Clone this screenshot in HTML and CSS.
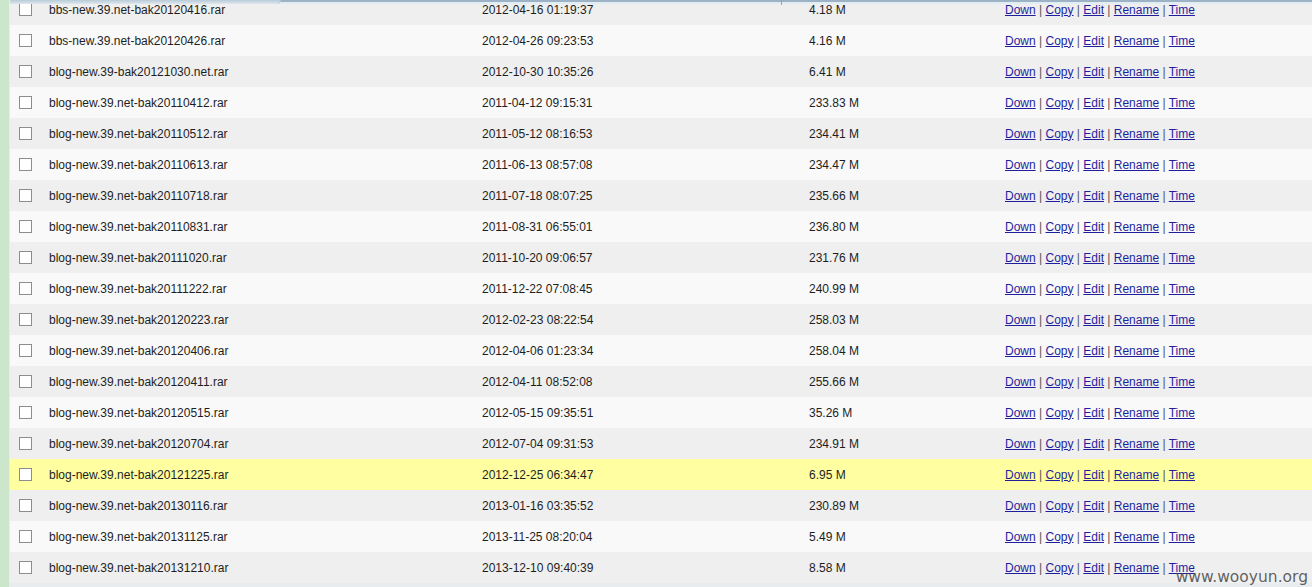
FILE: index.html
```html
<!DOCTYPE html>
<html>
<head>
    <meta charset="UTF-8">
    <title>File Manager</title>
    <link rel="stylesheet" href="styles.css">
</head>
<body>
    <div class="page">
        <div class="side-bar"></div>

        <div class="list-wrap">
            <div class="top-strip">
                <div class="top-tab"></div>
                <div class="top-line"><span class="top-divider"></span></div>
            </div>

            <table class="file-list">
                <colgroup>
                    <col class="c-check">
                    <col class="c-name">
                    <col class="c-date">
                    <col class="c-size">
                    <col>
                </colgroup>
                <tbody>
                    <tr><td><input type="checkbox"></td><td>bbs-new.39.net-bak20120416.rar</td><td>2012-04-16 01:19:37</td><td>4.18 M</td><td class="ops"><a href="#">Down</a> | <a href="#">Copy</a> | <a href="#">Edit</a> | <a href="#">Rename</a> | <a href="#">Time</a></td></tr>
                    <tr><td><input type="checkbox"></td><td>bbs-new.39.net-bak20120426.rar</td><td>2012-04-26 09:23:53</td><td>4.16 M</td><td class="ops"><a href="#">Down</a> | <a href="#">Copy</a> | <a href="#">Edit</a> | <a href="#">Rename</a> | <a href="#">Time</a></td></tr>
                    <tr><td><input type="checkbox"></td><td>blog-new.39-bak20121030.net.rar</td><td>2012-10-30 10:35:26</td><td>6.41 M</td><td class="ops"><a href="#">Down</a> | <a href="#">Copy</a> | <a href="#">Edit</a> | <a href="#">Rename</a> | <a href="#">Time</a></td></tr>
                    <tr><td><input type="checkbox"></td><td>blog-new.39.net-bak20110412.rar</td><td>2011-04-12 09:15:31</td><td>233.83 M</td><td class="ops"><a href="#">Down</a> | <a href="#">Copy</a> | <a href="#">Edit</a> | <a href="#">Rename</a> | <a href="#">Time</a></td></tr>
                    <tr><td><input type="checkbox"></td><td>blog-new.39.net-bak20110512.rar</td><td>2011-05-12 08:16:53</td><td>234.41 M</td><td class="ops"><a href="#">Down</a> | <a href="#">Copy</a> | <a href="#">Edit</a> | <a href="#">Rename</a> | <a href="#">Time</a></td></tr>
                    <tr><td><input type="checkbox"></td><td>blog-new.39.net-bak20110613.rar</td><td>2011-06-13 08:57:08</td><td>234.47 M</td><td class="ops"><a href="#">Down</a> | <a href="#">Copy</a> | <a href="#">Edit</a> | <a href="#">Rename</a> | <a href="#">Time</a></td></tr>
                    <tr><td><input type="checkbox"></td><td>blog-new.39.net-bak20110718.rar</td><td>2011-07-18 08:07:25</td><td>235.66 M</td><td class="ops"><a href="#">Down</a> | <a href="#">Copy</a> | <a href="#">Edit</a> | <a href="#">Rename</a> | <a href="#">Time</a></td></tr>
                    <tr><td><input type="checkbox"></td><td>blog-new.39.net-bak20110831.rar</td><td>2011-08-31 06:55:01</td><td>236.80 M</td><td class="ops"><a href="#">Down</a> | <a href="#">Copy</a> | <a href="#">Edit</a> | <a href="#">Rename</a> | <a href="#">Time</a></td></tr>
                    <tr><td><input type="checkbox"></td><td>blog-new.39.net-bak20111020.rar</td><td>2011-10-20 09:06:57</td><td>231.76 M</td><td class="ops"><a href="#">Down</a> | <a href="#">Copy</a> | <a href="#">Edit</a> | <a href="#">Rename</a> | <a href="#">Time</a></td></tr>
                    <tr><td><input type="checkbox"></td><td>blog-new.39.net-bak20111222.rar</td><td>2011-12-22 07:08:45</td><td>240.99 M</td><td class="ops"><a href="#">Down</a> | <a href="#">Copy</a> | <a href="#">Edit</a> | <a href="#">Rename</a> | <a href="#">Time</a></td></tr>
                    <tr><td><input type="checkbox"></td><td>blog-new.39.net-bak20120223.rar</td><td>2012-02-23 08:22:54</td><td>258.03 M</td><td class="ops"><a href="#">Down</a> | <a href="#">Copy</a> | <a href="#">Edit</a> | <a href="#">Rename</a> | <a href="#">Time</a></td></tr>
                    <tr><td><input type="checkbox"></td><td>blog-new.39.net-bak20120406.rar</td><td>2012-04-06 01:23:34</td><td>258.04 M</td><td class="ops"><a href="#">Down</a> | <a href="#">Copy</a> | <a href="#">Edit</a> | <a href="#">Rename</a> | <a href="#">Time</a></td></tr>
                    <tr><td><input type="checkbox"></td><td>blog-new.39.net-bak20120411.rar</td><td>2012-04-11 08:52:08</td><td>255.66 M</td><td class="ops"><a href="#">Down</a> | <a href="#">Copy</a> | <a href="#">Edit</a> | <a href="#">Rename</a> | <a href="#">Time</a></td></tr>
                    <tr><td><input type="checkbox"></td><td>blog-new.39.net-bak20120515.rar</td><td>2012-05-15 09:35:51</td><td>35.26 M</td><td class="ops"><a href="#">Down</a> | <a href="#">Copy</a> | <a href="#">Edit</a> | <a href="#">Rename</a> | <a href="#">Time</a></td></tr>
                    <tr><td><input type="checkbox"></td><td>blog-new.39.net-bak20120704.rar</td><td>2012-07-04 09:31:53</td><td>234.91 M</td><td class="ops"><a href="#">Down</a> | <a href="#">Copy</a> | <a href="#">Edit</a> | <a href="#">Rename</a> | <a href="#">Time</a></td></tr>
                    <tr class="hover"><td><input type="checkbox"></td><td>blog-new.39.net-bak20121225.rar</td><td>2012-12-25 06:34:47</td><td>6.95 M</td><td class="ops"><a href="#">Down</a> | <a href="#">Copy</a> | <a href="#">Edit</a> | <a href="#">Rename</a> | <a href="#">Time</a></td></tr>
                    <tr><td><input type="checkbox"></td><td>blog-new.39.net-bak20130116.rar</td><td>2013-01-16 03:35:52</td><td>230.89 M</td><td class="ops"><a href="#">Down</a> | <a href="#">Copy</a> | <a href="#">Edit</a> | <a href="#">Rename</a> | <a href="#">Time</a></td></tr>
                    <tr><td><input type="checkbox"></td><td>blog-new.39.net-bak20131125.rar</td><td>2013-11-25 08:20:04</td><td>5.49 M</td><td class="ops"><a href="#">Down</a> | <a href="#">Copy</a> | <a href="#">Edit</a> | <a href="#">Rename</a> | <a href="#">Time</a></td></tr>
                    <tr><td><input type="checkbox"></td><td>blog-new.39.net-bak20131210.rar</td><td>2013-12-10 09:40:39</td><td>8.58 M</td><td class="ops"><a href="#">Down</a> | <a href="#">Copy</a> | <a href="#">Edit</a> | <a href="#">Rename</a> | <a href="#">Time</a></td></tr>
                </tbody>
            </table>
        </div>
    </div>

    <div class="watermark">www.wooyun.org</div>
</body>
</html>
```

FILE: styles.css
```css
html, body {
    margin: 0;
    padding: 0;
    height: 100%;
    overflow: hidden;
}

body {
    font-family: Arial, "Liberation Sans", sans-serif;
    font-size: 12px;
    color: #1e1e1e;
    background-color: #e9ecee;
}

.page {
    display: flex;
    height: 100%;
}

.side-bar {
    width: 9px;
    flex-shrink: 0;
    background-color: #cbe6cb;
    border-right: 1px solid #e4efe4;
}

.list-wrap {
    flex: 1;
    position: relative;
    overflow: hidden;
}

/* header bar scrolled almost out of view */
.top-strip {
    position: absolute;
    top: 0;
    left: -10px;
    right: 0;
    height: 5px;
    display: flex;
    z-index: 2;
}

.top-tab {
    width: 280px;
    height: 4px;
    background: linear-gradient(#b9cbd9, #dde7ef);
    border-bottom-right-radius: 6px;
    border-right: 1px solid #a9bccb;
}

.top-line {
    flex: 1;
    height: 2px;
    background-color: #9db3c5;
    border-bottom: 2px solid #e1edf5;
    position: relative;
}

.top-divider {
    position: absolute;
    left: 500px;
    top: 0;
    width: 1px;
    height: 5px;
    background-color: #8ea4b6;
}

.file-list {
    width: 100%;
    border-collapse: collapse;
    table-layout: fixed;
    margin-top: -6px;
}

.c-check { width: 39px; }
.c-name { width: 433px; }
.c-date { width: 327px; }
.c-size { width: 196px; }

.file-list td {
    height: 31px;
    padding: 0;
    white-space: nowrap;
    vertical-align: middle;
}

.file-list tr:nth-child(odd) {
    background-color: #efefef;
}

.file-list tr:nth-child(even) {
    background-color: #f9f9f9;
}

.file-list tr.hover {
    background-color: #ffffa2;
}

.file-list input[type="checkbox"] {
    appearance: none;
    -webkit-appearance: none;
    display: block;
    width: 13px;
    height: 13px;
    margin: 0 0 0 9px;
    border: 1px solid #8d8d8d;
    background-color: #fff;
    box-sizing: border-box;
}

.ops {
    color: #555;
}

.ops a {
    color: #1f1f9e;
    text-decoration: underline;
}

.watermark {
    position: absolute;
    right: 4px;
    bottom: 1px;
    font-family: "DejaVu Sans", sans-serif;
    font-size: 15.5px;
    color: rgba(70, 70, 70, 0.85);
}
```
